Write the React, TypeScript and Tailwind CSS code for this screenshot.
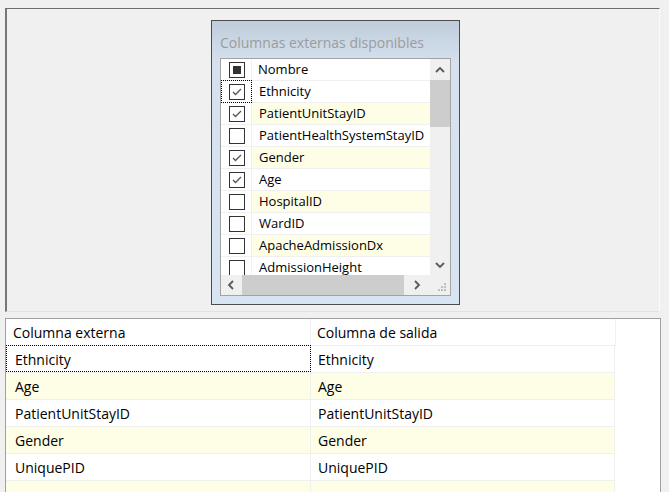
import React from "react";

const listItems: { name: string; checked: boolean }[] = [
  { name: "Ethnicity", checked: true },
  { name: "PatientUnitStayID", checked: true },
  { name: "PatientHealthSystemStayID", checked: false },
  { name: "Gender", checked: true },
  { name: "Age", checked: true },
  { name: "HospitalID", checked: false },
  { name: "WardID", checked: false },
  { name: "ApacheAdmissionDx", checked: false },
  { name: "AdmissionHeight", checked: false },
];

const gridRows = ["Ethnicity", "Age", "PatientUnitStayID", "Gender", "UniquePID", ""];

function Chevron({ dir }: { dir: "up" | "down" | "left" | "right" }) {
  const pts =
    dir === "up"
      ? "1,6 5,2 9,6"
      : dir === "down"
      ? "1,2 5,6 9,2"
      : dir === "left"
      ? "6,1 2,5 6,9"
      : "2,1 6,5 2,9";
  const w = dir === "up" || dir === "down" ? 10 : 8;
  const h = dir === "up" || dir === "down" ? 8 : 10;
  return (
    <svg width={w} height={h} viewBox={`0 0 ${w} ${h}`}>
      <polyline points={pts} fill="none" stroke="#5a5a5a" strokeWidth="1.8" />
    </svg>
  );
}

function CheckBox({ checked }: { checked: boolean }) {
  return (
    <div className="w-[16px] h-[16px] border border-[#333333] bg-white flex items-center justify-center">
      {checked && (
        <svg width="14" height="14" viewBox="0 0 14 14">
          <polyline points="3,7 5.5,9.5 11,4" fill="none" stroke="#555555" strokeWidth="1.3" />
        </svg>
      )}
    </div>
  );
}

function Grip() {
  return (
    <svg width="10" height="10" viewBox="0 0 10 10">
      <rect x="7" y="1" width="2" height="2" fill="#bdbdbd" />
      <rect x="4" y="4" width="2" height="2" fill="#bdbdbd" />
      <rect x="7" y="4" width="2" height="2" fill="#bdbdbd" />
      <rect x="1" y="7" width="2" height="2" fill="#bdbdbd" />
      <rect x="4" y="7" width="2" height="2" fill="#bdbdbd" />
      <rect x="7" y="7" width="2" height="2" fill="#bdbdbd" />
    </svg>
  );
}

export default function App() {
  return (
    <div className="w-[669px] h-[492px] overflow-hidden bg-[#f0f0f0] font-['Open_Sans',sans-serif] text-black">
      {/* Top panel */}
      <div className="ml-[5px] mt-[8px] w-[655px] h-[304px] border-t border-l-2 border-t-[#6d6d6d] border-l-[#777777] border-r border-b border-r-[#fbfbfb] border-b-[#e2e2e2] flex">
        {/* Dialog */}
        <div className="ml-[204px] mt-[11px] w-[249px] h-[285px] border border-[#4d4d4d] bg-linear-to-b from-[#bfcddb] via-[#d5e1ee] via-[15%] to-[#d7e4f3] flex flex-col">
          <div className="h-[37px] pl-[8px] pt-[12px] text-[14px] leading-[19px] text-[#9c9c9c] whitespace-nowrap">
            Columnas externas disponibles
          </div>
          {/* Listbox */}
          <div className="ml-[8px] w-[231px] h-[238px] border border-[#a3a3a3] bg-white flex flex-col text-[13px]">
            <div className="flex h-[216px]">
              <div className="w-[209px] overflow-hidden flex flex-col">
                <div className="flex h-[22px] shrink-0 border-b border-[#f0f0f0] bg-white">
                  <div className="w-[31px] shrink-0 border-r border-[#f0f0f0] flex items-center justify-center pl-[1px]">
                    <div className="w-[16px] h-[16px] border border-[#333333] flex items-center justify-center">
                      <div className="w-[8px] h-[8px] bg-[#333333]" />
                    </div>
                  </div>
                  <div className="flex items-center pl-[6px] whitespace-nowrap">Nombre</div>
                </div>
                {listItems.map((it, i) => (
                  <div
                    key={it.name}
                    className={`flex h-[22px] shrink-0 border-b border-[#f0f0f0] ${i % 2 === 1 ? "bg-[#fefee6]" : "bg-white"}`}
                  >
                    <div className="relative w-[31px] shrink-0 border-r border-[#f0f0f0] flex items-center justify-center pl-[1px] bg-white">
                      <CheckBox checked={it.checked} />
                      {i === 0 && (
                        <div className="absolute left-0 right-[-1px] top-[-1px] bottom-[-1px] border border-dotted border-black" />
                      )}
                    </div>
                    <div className="flex items-center pl-[7px] whitespace-nowrap">{it.name}</div>
                  </div>
                ))}
              </div>
              {/* vertical scrollbar */}
              <div className="w-[20px] bg-[#f0f0f0] flex flex-col">
                <div className="h-[21px] flex items-center justify-center">
                  <Chevron dir="up" />
                </div>
                <div className="h-[47px] bg-[#cdcdcd]" />
                <div className="flex-1" />
                <div className="h-[20px] flex items-center justify-center">
                  <Chevron dir="down" />
                </div>
              </div>
            </div>
            <div className="flex h-[20px]">
              <div className="w-[209px] bg-[#f0f0f0] flex items-stretch">
                <div className="w-[20px] flex items-center justify-center">
                  <Chevron dir="left" />
                </div>
                <div className="ml-[1px] w-[162px] bg-[#cdcdcd]" />
                <div className="flex-1 flex items-center justify-center">
                  <Chevron dir="right" />
                </div>
              </div>
              <div className="w-[20px] bg-[#f0f0f0] flex items-end justify-end pr-[3px] pb-[3px]">
                <Grip />
              </div>
            </div>
          </div>
        </div>
      </div>

      {/* Bottom grid */}
      <div className="ml-[5px] mt-[6px] w-[656px] h-[190px] border border-[#a0a0a0] bg-white text-[14px]">
        <div className="flex h-[27px]">
          <div className="w-[305px] h-[27px] border-r border-b border-[#f0f0f0] flex items-center pl-[7px] whitespace-nowrap">
            Columna externa
          </div>
          <div className="w-[305px] h-[27px] border-r border-b border-[#f0f0f0] flex items-center pl-[6px] whitespace-nowrap">
            Columna de salida
          </div>
        </div>
        {gridRows.map((r, i) => (
          <div key={i} className="flex h-[27px]">
            <div
              className={`relative w-[305px] h-[27px] border-r border-b border-[#f0f0f0] flex items-center pl-[9px] whitespace-nowrap ${
                i % 2 === 1 ? "bg-[#fefee6]" : "bg-white"
              }`}
            >
              {r}
              {i === 0 && (
                <div className="absolute left-0 right-[-1px] top-[-1px] bottom-0 border border-dotted border-black" />
              )}
            </div>
            <div
              className={`w-[304px] h-[27px] border-r border-b border-[#f0f0f0] flex items-center pl-[7px] whitespace-nowrap ${
                i % 2 === 1 ? "bg-[#fefee6]" : "bg-white"
              }`}
            >
              {r}
            </div>
          </div>
        ))}
      </div>
    </div>
  );
}
